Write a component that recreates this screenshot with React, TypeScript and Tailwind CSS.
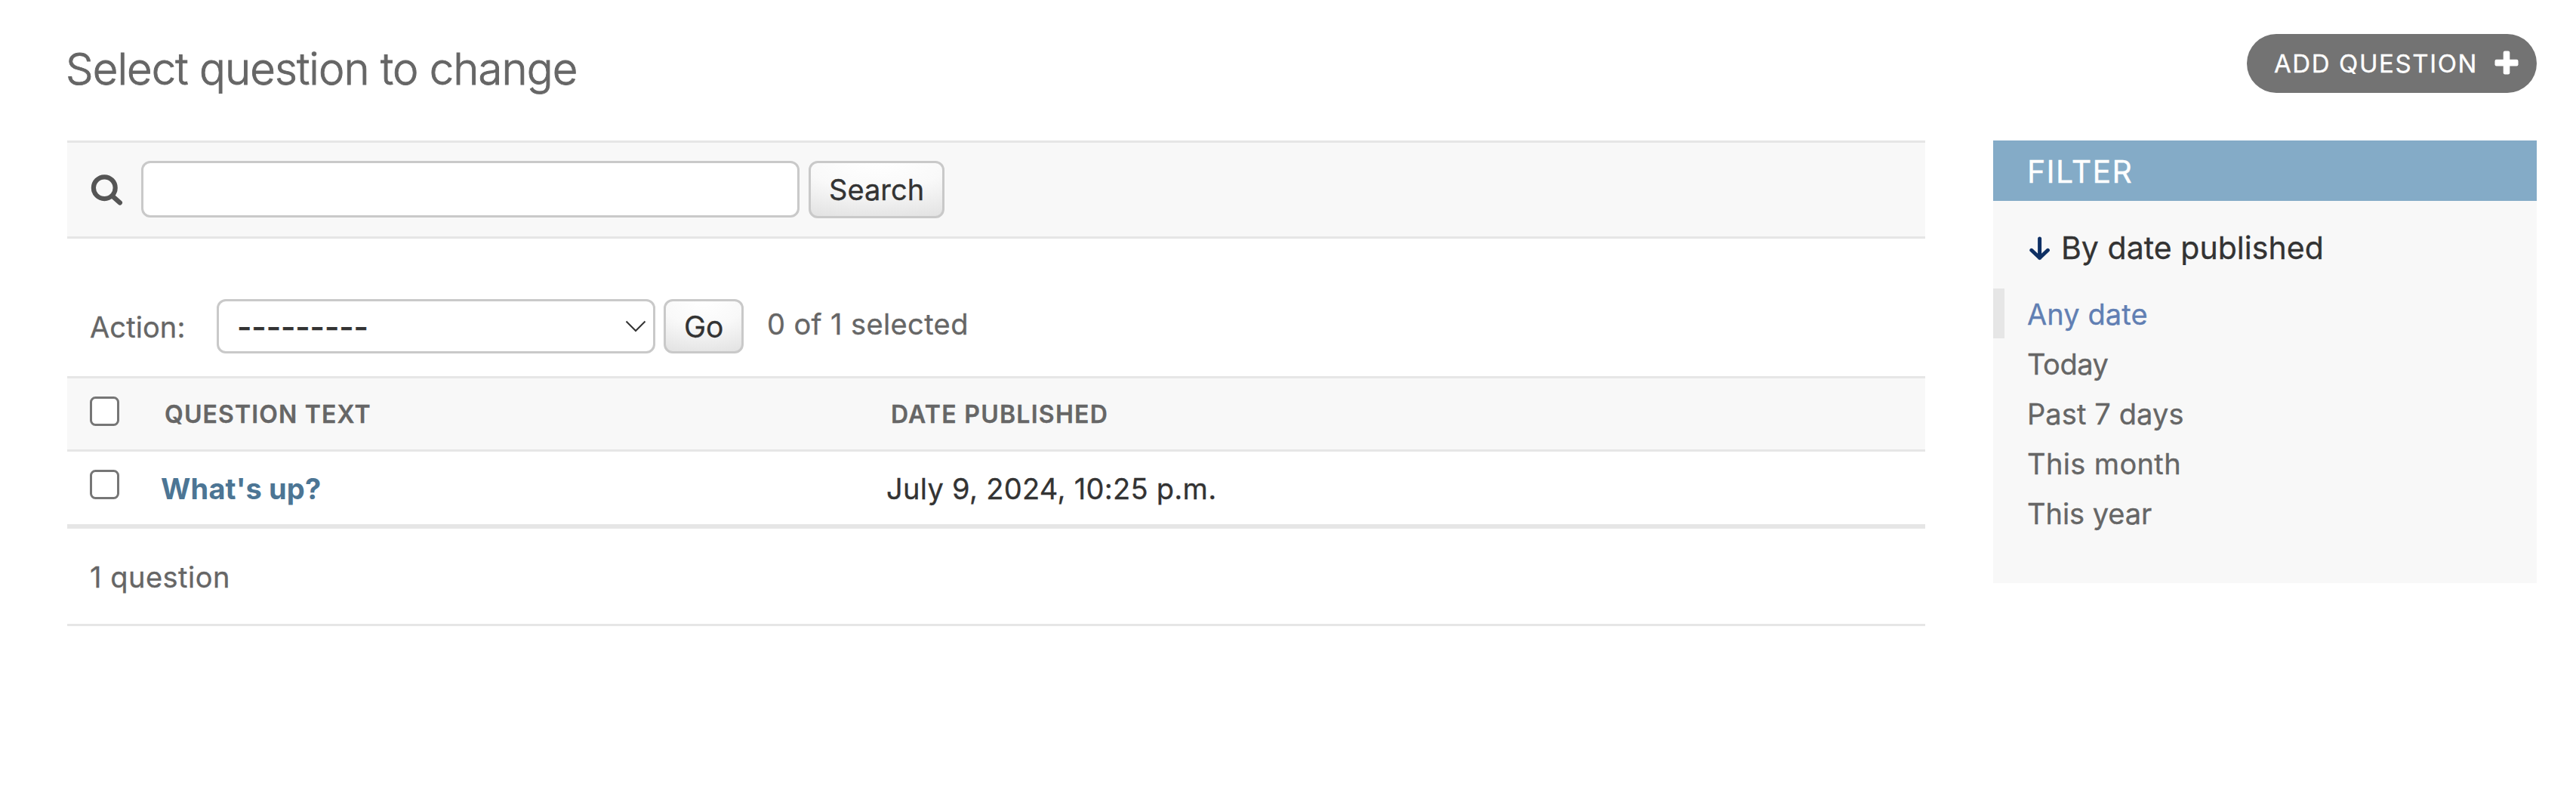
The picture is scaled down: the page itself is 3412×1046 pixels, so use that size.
import type { ReactNode } from "react";

const filters = [
  { label: "Any date", selected: true, tracking: "tracking-[0.08px]" },
  { label: "Today", tracking: "tracking-[-0.45px]" },
  { label: "Past 7 days", tracking: "tracking-[0.1px]" },
  { label: "This month", tracking: "tracking-[0.36px]" },
  { label: "This year", tracking: "tracking-[-0.05px]" },
];

function SearchIcon() {
  return (
    <svg className="mt-[15px] mr-[22px] size-[46px] shrink-0" viewBox="0 0 46 46" fill="none" stroke="#555555" strokeLinecap="round">
      <circle cx="19.3" cy="20.7" r="14.4" strokeWidth="6.2" />
      <path d="M30.5 32.2 39.8 40.3" strokeWidth="6.4" />
    </svg>
  );
}

function PlusIcon() {
  return (
    <svg className="mt-[22px] size-8" viewBox="0 0 32 32" fill="#ffffff">
      <rect x="0.5" y="11.8" width="31" height="8.6" rx="2.2" />
      <rect x="11.7" y="0.5" width="8.6" height="31" rx="2.2" />
    </svg>
  );
}

function ArrowDownIcon() {
  return (
    <svg className="mr-[14px] h-[34px] w-7" viewBox="0 0 28 34" fill="none" stroke="#0f3064" strokeWidth="5" strokeLinecap="round" strokeLinejoin="round">
      <path d="M13.6 4V29.5M2.8 19.3 13.6 29.5 24.4 19.3" />
    </svg>
  );
}

function Checkbox() {
  return (
    <span
      role="checkbox"
      aria-checked="false"
      className="mt-[24px] ml-[30px] block size-[39px] rounded-[7.5px] border-[3px] border-[#767676] bg-white"
    />
  );
}

function GradientButton({ className, children }: { className: string; children: ReactNode }) {
  return (
    <button
      type="button"
      className={
        "shrink-0 rounded-[12px] border-[3px] border-[#c9c9c9] bg-[radial-gradient(ellipse_120%_110%_at_50%_0%,#ffffff_0%,#f9f9f9_45%,#e2e2e2_100%)] text-left text-[38px] text-[#333333] [-webkit-text-stroke:0.3px] " +
        className
      }
    >
      {children}
    </button>
  );
}

export default function App() {
  return (
    <div className="h-[1046px] w-[3412px] overflow-hidden bg-white pr-[52px] pl-[89px] font-['Inter',sans-serif] text-[38px] text-[#666666] [-webkit-text-stroke:0.3px]">
      <header className="flex h-[186px] items-start justify-between">
        <h1 className="mt-[52px] ml-[-2px] text-[58px] leading-[78px] font-light tracking-[-0.92px] whitespace-nowrap [-webkit-text-stroke:0.9px]">
          Select question to change
        </h1>
        <a className="mt-[45px] flex h-[78px] w-[384px] rounded-full bg-[#737373] pl-[36px] text-[33px] leading-[78px] tracking-[1.6px] whitespace-nowrap text-white">
          <span className="w-[292px]">ADD QUESTION</span>
          <PlusIcon />
        </a>
      </header>

      <div className="flex items-start gap-[90px]">
        <main className="w-[2461px]">
          <div className="flex h-[130px] items-start border-y-[3px] border-[#e6e6e6] bg-[#f8f8f8] pt-6 pl-[30px]">
            <SearchIcon />
            <input
              type="text"
              aria-label="Search"
              className="h-[75px] w-[872px] rounded-[12px] border-[3px] border-[#c9c9c9] bg-white"
            />
            <GradientButton className="ml-3 h-[76px] w-[180px] pl-6 leading-[70px]">Search</GradientButton>
          </div>

          <div className="flex h-[182px] items-start pt-20 pl-[30px]">
            <span className="w-[168px] leading-[74px] tracking-[0.1px]">Action:</span>
            <div className="flex h-[72px] w-[581px] items-center justify-between rounded-[12px] border-[3px] border-[#c9c9c9] bg-white pr-2 pl-6">
              <span className="pt-[2px] text-[42px] leading-[64px] font-medium tracking-[-0.1px] text-[#333333]">---------</span>
              <svg className="h-[16px] w-[30px]" viewBox="0 0 30 16" fill="none" stroke="#333333" strokeWidth="2">
                <path d="M2.5 1.5 15 14 27.5 1.5" />
              </svg>
            </div>
            <GradientButton className="ml-[11px] h-[72px] w-[106px] pl-[24px] text-[39px] leading-[68px]">Go</GradientButton>
            <span className="ml-[31px] leading-[66px] tracking-[0.38px]">0 of 1 selected</span>
          </div>

          <div className="grid h-[100px] grid-cols-[124px_961px_1fr] border-y-[3px] border-[#e6e6e6] bg-[#f8f8f8] text-[32px] leading-[96px] font-semibold">
            <Checkbox />
            <span className="pl-[5px] tracking-[1.15px]">QUESTION TEXT</span>
            <span className="pl-[6px] tracking-[1.27px]">DATE PUBLISHED</span>
          </div>
          <div className="grid h-[102px] grid-cols-[124px_961px_1fr] border-b-[6px] border-[#e6e6e6] leading-[98px]">
            <Checkbox />
            <a className="font-bold tracking-[0.15px] text-[#4c7594] [-webkit-text-stroke:0px]">What's up?</a>
            <span className="tracking-[0.3px] text-[#333333]">July 9, 2024, 10:25 p.m.</span>
          </div>
          <p className="h-[129px] border-b-[3px] border-[#e6e6e6] pl-[30px] leading-[128px] tracking-[0.5px]">1 question</p>
        </main>

        <aside className="w-[720px] bg-[#f8f8f8] pb-[60px]">
          <h2 className="h-20 bg-[#84abc7] pl-[45px] text-[41px] leading-[82px] font-normal tracking-[1.4px] text-white">FILTER</h2>
          <h3 className="flex h-[116px] items-center pt-[9px] pl-12 text-[41px] font-normal tracking-[0.04px] text-[#333333]">
            <ArrowDownIcon />
            By date published
          </h3>
          <ul>
            {filters.map((f) => (
              <li
                key={f.label}
                className={
                  "h-[66px] border-l-[15px] pl-[30px] leading-[68px] " +
                  f.tracking +
                  (f.selected ? " border-[#e6e6e6] text-[#617fb3]" : " border-transparent")
                }
              >
                {f.label}
              </li>
            ))}
          </ul>
        </aside>
      </div>
    </div>
  );
}
